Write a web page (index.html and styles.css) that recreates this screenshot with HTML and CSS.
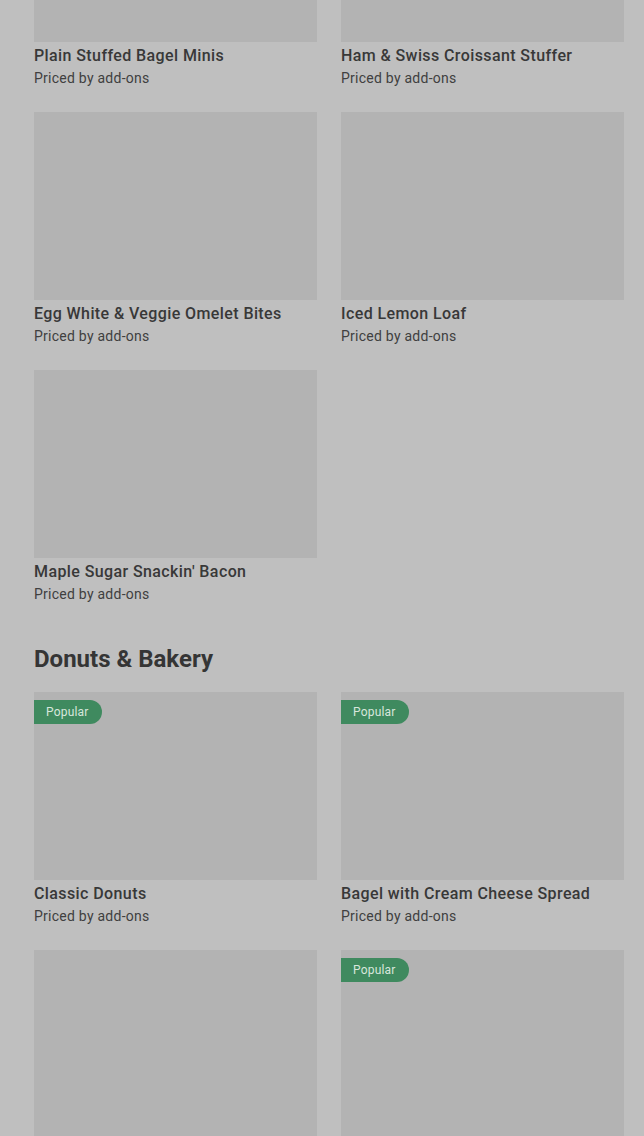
FILE: index.html
```html
<!DOCTYPE html>
<html>
<head>
<meta charset="utf-8">
<link rel="stylesheet" href="styles.css">
</head>
<body>
<main class="page">
  <section class="grid first">
    <div class="card"><div class="thumb"></div><div class="name">Plain Stuffed Bagel Minis</div><div class="price">Priced by add-ons</div></div>
    <div class="card"><div class="thumb"></div><div class="name">Ham &amp; Swiss Croissant Stuffer</div><div class="price">Priced by add-ons</div></div>
    <div class="card"><div class="thumb"></div><div class="name">Egg White &amp; Veggie Omelet Bites</div><div class="price">Priced by add-ons</div></div>
    <div class="card"><div class="thumb"></div><div class="name">Iced Lemon Loaf</div><div class="price">Priced by add-ons</div></div>
    <div class="card"><div class="thumb"></div><div class="name">Maple Sugar Snackin' Bacon</div><div class="price">Priced by add-ons</div></div>
  </section>
  <h2 class="heading">Donuts &amp; Bakery</h2>
  <section class="grid">
    <div class="card"><div class="thumb"><span class="badge">Popular</span></div><div class="name">Classic Donuts</div><div class="price">Priced by add-ons</div></div>
    <div class="card"><div class="thumb"><span class="badge">Popular</span></div><div class="name">Bagel with Cream Cheese Spread</div><div class="price">Priced by add-ons</div></div>
    <div class="card"><div class="thumb"></div></div>
    <div class="card"><div class="thumb"><span class="badge">Popular</span></div></div>
  </section>
</main>
</body>
</html>
```

FILE: styles.css
```css
html, body {
  margin: 0;
  padding: 0;
  background: #bfbfbf;
  overflow: hidden;
}
.page {
  padding: 0 20px 0 34px;
  margin-top: -146px;
  font-family: Roboto, "Liberation Sans", sans-serif;
  color: #333333;
}
.grid {
  display: grid;
  grid-template-columns: 283px 283px;
  column-gap: 24px;
  row-gap: 23px;
}
.card {
  display: flex;
  flex-direction: column;
}
.thumb {
  position: relative;
  height: 188px;
  background: #b3b3b3;
}
.name {
  margin-top: 3px;
  font-size: 16px;
  line-height: 22px;
  font-weight: 500;
  letter-spacing: 0.4px;
  color: #383838;
}
.price {
  font-size: 14px;
  line-height: 22px;
  letter-spacing: 0.25px;
  color: #404040;
}
.heading {
  margin: 37px 0 16px;
  font-size: 24px;
  line-height: 34px;
  font-weight: 700;
  letter-spacing: 0;
  color: #353535;
}
.badge {
  position: absolute;
  top: 8px;
  left: 0;
  height: 24px;
  line-height: 24px;
  padding: 0 13px 0 12px;
  font-size: 12px;
  letter-spacing: 0.2px;
  color: #d7e6dc;
  background: #3f8a5f;
  border-radius: 0 12px 12px 0;
}
```
